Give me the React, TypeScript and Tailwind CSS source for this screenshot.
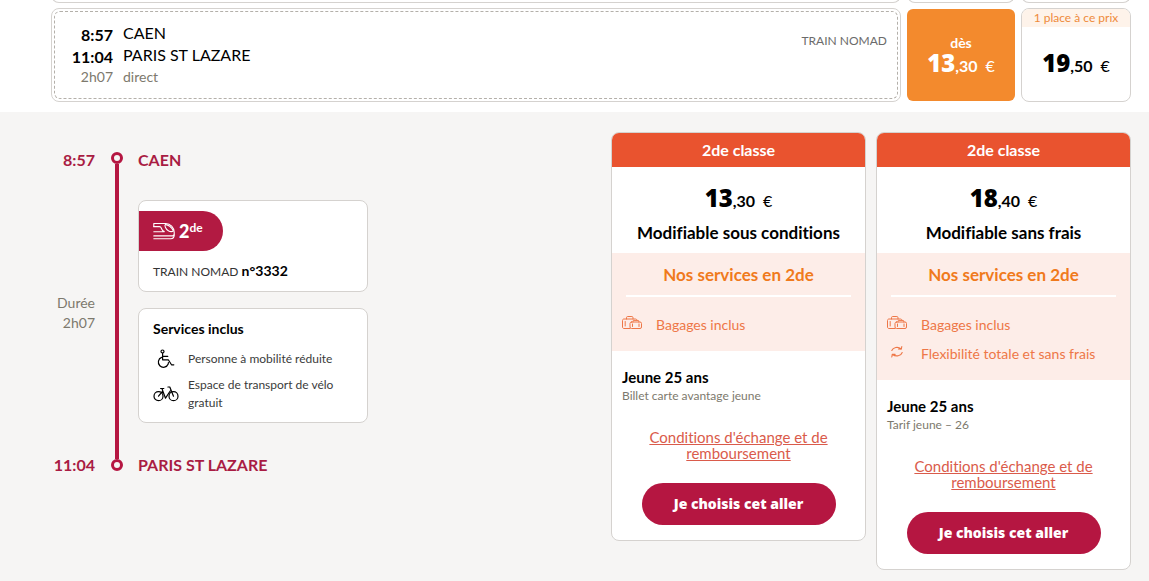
import React from 'react';

interface Service {
  icon: 'luggage' | 'exchange';
  label: string;
}

interface Offer {
  euros: string;
  cents: string;
  title: string;
  services: Service[];
  passenger: string;
  fare: string;
}

const offers: Offer[] = [
  {
    euros: '13',
    cents: ',30',
    title: 'Modifiable sous conditions',
    services: [{ icon: 'luggage', label: 'Bagages inclus' }],
    passenger: 'Jeune 25 ans',
    fare: 'Billet carte avantage jeune'
  },
  {
    euros: '18',
    cents: ',40',
    title: 'Modifiable sans frais',
    services: [
      { icon: 'luggage', label: 'Bagages inclus' },
      { icon: 'exchange', label: 'Flexibilité totale et sans frais' }
    ],
    passenger: 'Jeune 25 ans',
    fare: 'Tarif jeune – 26'
  }
];

function TrainIcon() {
  return (
    <svg width="22" height="18" viewBox="0 0 22 18" fill="none" stroke="currentColor" strokeWidth="1.1" strokeLinecap="round" strokeLinejoin="round" aria-hidden="true">
      <path d="M.8 4.600V1.500h12c4.500 0 8.400 4.200 8.400 8.800v1.600c0 1.300-.8 2-2 2H.8" />
      <path d="M.8 4.600h5.700c1.700 0 1.600 1.300 2.300 2.700.5 1.200 1.200 1.900 2.400 1.900M.8 9.800h10.400" />
      <path d="M12.300 2.600c-1 .8.5 4.700 3 6.100 1.700 1 4.200.9 5 .2M12.300 2.600c2.700-.2 6.500 2.600 8 6.300" />
      <path d="M.8 16.800h17c2.300 0 3.400-1.600 3.400-4" />
    </svg>
  );
}

function WheelchairIcon() {
  return (
    <svg width="18" height="20" viewBox="0 0 18 20" fill="none" stroke="currentColor" strokeWidth="1.2" strokeLinecap="round" strokeLinejoin="round" aria-hidden="true">
      <circle cx="5.5" cy="2.5" r="1.5" />
      <path d="M5.6 4.2v6.6h5.7l3.2 5h2.3M5.8 7.3h5" />
      <path d="M4.600 8.400A5.100 5.100 0 1 0 11.200 15l.2-1.300" />
    </svg>
  );
}

function BikeIcon() {
  return (
    <svg width="26" height="16" viewBox="0 0 26 16" fill="none" stroke="currentColor" strokeWidth="1.2" strokeLinecap="round" strokeLinejoin="round" aria-hidden="true">
      <circle cx="5.5" cy="10.2" r="4.5" />
      <circle cx="20.5" cy="10.2" r="4.5" />
      <path d="M5.5 10.2 9.8 5l2.700 7.200L17.200 5M9.800 5 9 2.500M7.600 2.500h3.200M20.500 10.200 16.800 1h-1.900" />
    </svg>
  );
}

function LuggageIcon() {
  return (
    <svg width="20" height="14" viewBox="0 0 20 14" fill="none" stroke="currentColor" strokeWidth="1" strokeLinecap="round" strokeLinejoin="round" aria-hidden="true">
      <path d="M8 12.500H2c-.9 0-1.500-.6-1.500-1.500V4.500C.5 3.600 1.100 3 2 3h11.500c.8 0 1.300.5 1.400 1.200M4.500 3V1.700c0-.7.4-1.200 1.100-1.200h4.300c.7 0 1.100.5 1.100 1.200V3M3.200 5.500v4.500" />
      <rect x="8" y="6" width="11.500" height="6.500" rx="1.500" />
      <path d="M11 6v-.8c0-.5.3-.8.8-.8H16c.5 0 .8.3.8.8V6M10.500 8v2.500M17 8v2.500" />
    </svg>
  );
}

function ExchangeIcon() {
  return (
    <svg width="14" height="14" viewBox="0 0 14 14" fill="none" stroke="currentColor" strokeWidth="1.100" strokeLinecap="round" strokeLinejoin="round" aria-hidden="true">
      <path d="M1.800 5.500C3 2.200 8 1.400 11 3.800M11.800 1.500 11.300 4.200 8.500 4" />
      <path d="M12.200 7.500c-1.200 3.500-6.200 4.500-9.700 2M1.800 12l.5-2.800 2.800.2" />
    </svg>
  );
}

function Price({ euros, cents }: { euros: string; cents: string }) {
  return (
    <span className="flex items-baseline justify-center leading-6">
      <span className="font-['Noto_Sans','Lato',sans-serif] text-2xl leading-6 font-black">{euros}</span>
      <span className="text-base leading-6 font-bold">{cents}</span>
      <span className="ml-2 text-base leading-6">€</span>
    </span>
  );
}

function OfferCard({ offer }: { offer: Offer }) {
  return (
    <article className="w-[255px] overflow-hidden rounded-lg border border-[#d5d2cf] bg-white">
      <h3 className="bg-[#e9532f] text-center text-base font-bold leading-[34px] text-white">2de classe</h3>

      <div className="pt-[19px] pb-2 text-center">
        <Price euros={offer.euros} cents={offer.cents} />
        <h4 className="mt-2 text-[17px] font-bold leading-6">{offer.title}</h4>
      </div>

      {/* Included services */}
      <div className="bg-[#fdede8] px-2.5 pt-2.5 pb-4">
        <h5 className="text-center text-[17px] font-bold leading-6 text-[#f07a1c]">Nos services en 2de</h5>
        <div className="mx-1 mt-2 h-0.5 bg-white" />
        <ul className="mt-[18px] flex flex-col gap-[9px]">
          {offer.services.map((service) => (
            <li key={service.label} className="flex items-start text-sm leading-5 text-[#ee7747]">
              <span className="flex h-4 w-5 items-center justify-center">
                {service.icon === 'luggage' ? <LuggageIcon /> : <ExchangeIcon />}
              </span>
              <span className="ml-3.5">{service.label}</span>
            </li>
          ))}
        </ul>
      </div>

      <div className="px-2.5 pt-4 pb-[15px]">
        <p className="text-[15px] font-bold leading-5">{offer.passenger}</p>
        <p className="text-xs leading-[18px] text-[#7d796d]">{offer.fare}</p>
        <a href="#conditions" className="mx-auto mt-6 block w-48 text-center text-[15px] leading-4 text-[#da5b4b] underline">
          Conditions d'échange et de remboursement
        </a>
        <button type="button" className="mx-auto mt-[22px] block h-[42px] w-[194px] rounded-full bg-[#b51641] font-['Noto_Sans','Lato',sans-serif] text-sm font-black text-white">
          Je choisis cet aller
        </button>
      </div>
    </article>
  );
}

function Itinerary() {
  return (
    <div className="mt-[18px] grid grid-cols-[44px_43px_230px] grid-rows-[20px_auto_20px] text-base leading-5">
      <p className="text-right font-bold text-[#a91c43]">8:57</p>

      {/* Vertical line with a stop at each end */}
      <div className="row-span-3 flex flex-col items-center pt-0.5 pb-1">
        <div className="size-3 rounded-full border-3 border-[#b51641]" />
        <div className="w-1 flex-1 bg-[#b51641]" />
        <div className="size-3 rounded-full border-3 border-[#b51641]" />
      </div>

      <p className="font-bold text-[#a91c43]">CAEN</p>

      <p className="self-center text-right text-sm leading-5 text-[#7d796d]">
        Durée
        <br />
        2h07
      </p>

      <div className="flex flex-col gap-4 pt-[30px] pb-8">
        <div className="rounded-lg border border-[#d5d2cf] bg-white pt-2.5 pb-2.5">
          <div className="flex h-10 w-[84px] items-center rounded-r-full bg-[#b21a42] pl-3.5 text-white">
            <TrainIcon />
            <span className="ml-1 text-lg font-black">2</span>
            <span className="mb-1.5 text-xs font-bold">de</span>
          </div>
          <p className="mt-2.5 h-5 pl-3.5 text-xs leading-5 text-[#333333]">
            TRAIN NOMAD <b className="text-sm leading-5 text-black">n°3332</b>
          </p>
        </div>

        <div className="rounded-lg border border-[#d5d2cf] bg-white px-3.5 pt-2.5 pb-2.5">
          <h3 className="text-sm font-bold leading-5">Services inclus</h3>
          <ul className="mt-2.5 text-xs leading-[18px] text-[#3b3b3b]">
            <li className="flex items-center">
              <span className="flex w-[26px] justify-center text-black"><WheelchairIcon /></span>
              <span className="ml-[9px]">Personne à mobilité réduite</span>
            </li>
            <li className="mt-[7px] flex items-center">
              <span className="flex w-[26px] shrink-0 justify-center text-black"><BikeIcon /></span>
              <span className="ml-[9px]">Espace de transport de vélo gratuit</span>
            </li>
          </ul>
        </div>
      </div>

      <p className="text-right font-bold text-[#a91c43]">11:04</p>
      <p className="whitespace-nowrap font-bold text-[#a91c43]">PARIS ST LAZARE</p>
    </div>
  );
}

export default function App() {
  return (
    <main className="min-h-screen bg-[#f6f5f4] font-['Lato',sans-serif] text-black [font-variant-ligatures:none]">
      <section className="bg-white pr-[18px] pb-2.5 pl-[51px]">
        {/* Bottom edge of the previous journey */}
        <div className="flex h-[3px] items-end gap-1.5">
          <div className="h-2 flex-1 rounded-b-lg border border-t-0 border-[#d5d2cf]" />
          <div className="h-2 w-[108px] rounded-b-lg border border-t-0 border-[#d5d2cf]" />
          <div className="h-2 w-[110px] rounded-b-lg border border-t-0 border-[#d5d2cf]" />
        </div>

        <div className="mt-[5px] flex h-[94px] gap-1.5">
          <div className="flex-1 rounded-lg border border-[#d5d2cf] p-0.5">
            <div className="flex h-full justify-between rounded-md border border-dashed border-[#b4b0aa] px-2.5">
              <div className="flex gap-2.5 text-base leading-[22px]">
                <div className="w-12 pt-3 text-right font-bold">
                  <p>8:57</p>
                  <p>11:04</p>
                  <p className="text-sm leading-[18px] font-normal text-[#7d796d]">2h07</p>
                </div>
                <div className="pt-2.5">
                  <p>CAEN</p>
                  <p>PARIS ST LAZARE</p>
                  <p className="text-sm leading-[22px] text-[#7d796d]">direct</p>
                </div>
              </div>
              <p className="pt-[19px] text-xs leading-5 text-[#6b6b6b]">TRAIN NOMAD</p>
            </div>
          </div>

          <button type="button" className="my-px w-[108px] rounded-md bg-[#f38a2d] pt-0.5 text-white">
            <span className="block text-sm font-bold leading-4">dès</span>
            <Price euros="13" cents=",30" />
          </button>

          <button type="button" className="flex w-[110px] flex-col overflow-hidden rounded-lg border border-[#d5d2cf] bg-white">
            <span className="w-full bg-[#fef3ea] text-xs leading-[18px] text-[#ee8a3a]">1 place à ce prix</span>
            <span className="mt-6 w-full"><Price euros="19" cents=",50" /></span>
          </button>
        </div>
      </section>

      <section className="flex items-start justify-between pt-5 pr-[18px] pb-[11px] pl-[51px]">
        <Itinerary />
        <div className="flex items-start gap-2.5">
          {offers.map((offer) => (
            <OfferCard key={offer.title} offer={offer} />
          ))}
        </div>
      </section>
    </main>
  );
}
